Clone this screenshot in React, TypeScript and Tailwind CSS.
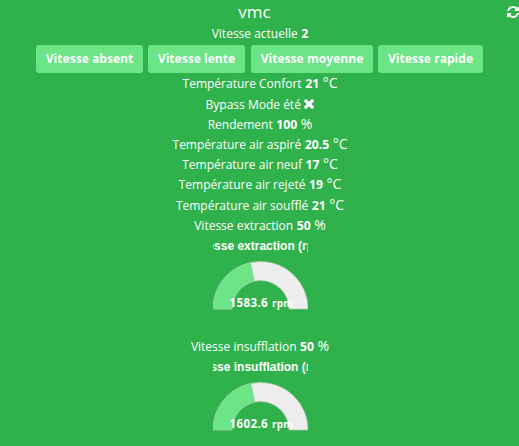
import type { ReactNode } from "react";

const speeds = [
  { label: "Vitesse absent", width: "w-[107px]" },
  { label: "Vitesse lente", width: "w-[97px]" },
  { label: "Vitesse moyenne", width: "ml-px w-[122px]" },
  { label: "Vitesse rapide", width: "w-[105px]" },
];

function RefreshIcon() {
  return (
    <svg className="h-3 w-3 shrink-0" viewBox="128 128 1536 1536" fill="currentColor">
      <path d="M1639 1056q0 5-1 7-64 268-268 434.5t-478 166.5q-146 0-282.5-55t-243.5-157l-129 129q-19 19-45 19t-45-19-19-45v-448q0-26 19-45t45-19h448q26 0 45 19t19 45-19 45l-137 137q71 66 161 102t187 36q134 0 250-65t186-179q11-17 53-117 8-23 30-23h192q13 0 22.5 9.5t9.5 22.5zm25-800v448q0 26-19 45t-45 19h-448q-26 0-45-19t-19-45 19-45l138-138q-148-137-349-137-134 0-250 65t-186 179q-11 17-53 117-8 23-30 23h-199q-13 0-22.5-9.5t-9.5-22.5v-7q65-268 270-434.5t480-166.5q146 0 284 55.5t245 156.5l130-129q19-19 45-19t45 19 19 45z" />
    </svg>
  );
}

function CrossIcon() {
  return (
    <svg className="inline h-[10px] w-[10px] align-baseline" viewBox="302 366 1188 1188" fill="currentColor">
      <path d="M1490 1322q0 40-28 68l-136 136q-28 28-68 28t-68-28l-294-294-294 294q-28 28-68 28t-68-28l-136-136q-28-28-28-68t28-68l294-294-294-294q-28-28-28-68t28-68l136-136q28-28 68-28t68 28l294 294 294-294q28-28 68-28t68 28l136 136q28 28 28 68t-28 68l-294 294 294 294q28 28 28 68z" />
    </svg>
  );
}

function Row({ label, value, unit }: { label: string; value: ReactNode; unit?: string }) {
  return (
    <div className="flex h-[20.25px] items-baseline justify-center gap-[3.5px] whitespace-pre text-[12px] leading-[20px]">
      <span>{label}</span>
      <span className="text-[12.25px] font-bold">{value}</span>
      {unit && <span className="text-[14px] leading-[18px]">{unit}</span>}
    </div>
  );
}

function Gauge({ title, value, split, inner }: { title: string; value: string; split: string; inner: string }) {
  return (
    <svg className="mx-auto block h-[100px] w-[95px] translate-x-[1px] overflow-hidden" viewBox="0 0 95 100">
      <text x="47.5" y="14" textAnchor="middle" fill="#fff" className="font-['Liberation_Sans',Arial,sans-serif] text-[12px] font-bold">
        {title}
      </text>
      <path d="M0 73A47.5 47.5 0 0 1 95 73H76A28.5 28.5 0 0 0 19 73Z" fill="#ededed" stroke="#b5c9b7" strokeWidth="0.7" />
      <path d={`M0 73A47.5 47.5 0 0 1 ${split}L${inner}A28.5 28.5 0 0 0 19 73Z`} fill="#6be585" stroke="#9bc9a3" strokeWidth="0.5" />
      <text x="16.5" y="71" fill="#fff" className="font-['Open_Sans',sans-serif] font-bold">
        <tspan className="text-[11.5px] tracking-[0.4px]">{value}</tspan>
        <tspan dx="4" className="text-[10px] tracking-[0.2px]">rpm</tspan>
      </text>
    </svg>
  );
}

export default function App() {
  return (
    <main className="h-[446px] w-[519px] overflow-hidden bg-[#2fb24c] font-['Open_Sans',sans-serif] text-white">
      <header className="flex h-6 items-center">
        <h1 className="flex-1 pb-px pl-[2px] text-center text-[17px] leading-[22px]">vmc</h1>
        <RefreshIcon />
      </header>
      <div className="h-[21px] pl-px">
        <Row label="Vitesse actuelle" value="2" />
      </div>
      <div className="flex h-[29px] justify-center gap-[5px]">
        {speeds.map((speed) => (
          <button key={speed.label} className={`h-7 ${speed.width} rounded-[3px] bg-[#6be585] text-[12.1px] font-bold leading-7 whitespace-nowrap`}>
            {speed.label}
          </button>
        ))}
      </div>
      <div className="pl-px">
        <Row label="Température Confort" value="21" unit="°C" />
        <div className="h-[20.25px] pt-[0.75px]">
          <Row label="Bypass Mode été" value={<CrossIcon />} />
        </div>
        <Row label="Rendement" value="100" unit="%" />
        <Row label="Température air aspiré" value="20.5" unit="°C" />
        <Row label="Température air neuf" value="17" unit="°C" />
        <Row label="Température air rejeté" value="19" unit="°C" />
        <Row label="Température air soufflé" value="21" unit="°C" />
        <Row label="Vitesse extraction" value="50" unit="%" />
      </div>
      <Gauge title="Vitesse extraction (rpm)" value="1583.6" split="37.5 26.56" inner="41.5 45.14" />
      <div className="h-[21px] pt-[0.5px] pl-px">
        <Row label="Vitesse insufflation" value="50" unit="%" />
      </div>
      <Gauge title="Vitesse insufflation (rpm)" value="1602.6" split="38.1 26.44" inner="41.8 45.08" />
    </main>
  );
}
